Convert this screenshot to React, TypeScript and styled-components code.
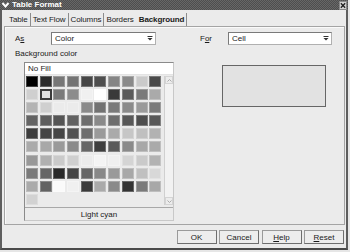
import { createGlobalStyle, styled } from 'styled-components';

const GlobalStyle = createGlobalStyle`
  html, body {
    margin: 0;
    padding: 0;
    background: #e6e6e6;
  }
  body {
    width: 350px;
    height: 252px;
    overflow: hidden;
    font-family: "Liberation Sans", Arial, sans-serif;
    font-size: 8px;
    color: #1a1a1a;
  }
`;

const swatches = [
  '#000000', '#2b2b2b', '#777777', '#747474', '#474747', '#4f4f4f', '#858585', '#8a8a8a', '#cacaca', '#4a4a4a',
  '#cfcfcf', '#e0e0e0', '#7a7a7a', '#8c8c8c', '#f0f0f0', '#ffffff', '#3a3a3a', '#5a5a5a', '#7a7a7a', '#aaaaaa',
  '#b4b4b4', '#cfcfcf', '#ebebeb', '#ebebeb', '#8a8a8a', '#727272', '#7a7a7a', '#8a8a8a', '#9a9a9a', '#7a7a7a',
  '#646464', '#5e5e5e', '#555555', '#626262', '#6e6e6e', '#8a8a8a', '#6e6e6e', '#585858', '#4e4e4e', '#585858',
  '#3c3c3c', '#454545', '#454545', '#525252', '#6e6e6e', '#9a9a9a', '#aaaaaa', '#c6c6c6', '#c0c0c0', '#b2b2b2',
  '#aaaaaa', '#a8a8a8', '#9a9a9a', '#8a8a8a', '#666666', '#3e3e3e', '#5a5a5a', '#8a8a8a', '#a8a8a8', '#aaaaaa',
  '#989898', '#b0b0b0', '#cacaca', '#cfcfcf', '#ebebeb', '#f4f4f4', '#efefef', '#d4d4d4', '#cacaca', '#b2b2b2',
  '#7a7a7a', '#666666', '#2a2a2a', '#444444', '#666666', '#888888', '#9a9a9a', '#a8a8a8', '#c0c0c0', '#d8d8d8',
  '#aaaaaa', '#626262', '#fafafa', '#f0f0f0', '#3a3a3a', '#aaaaaa', '#8a8a8a', '#333333', '#7a7a7a', '#a8a8a8',
  '#d2d2d2',
];

const tabs = ['Table', 'Text Flow', 'Columns', 'Borders', 'Background'];

const App = () => {
  return (
    <>
      <GlobalStyle />
      <Window>
        <TitleBar>
          <svg width="9" height="8" viewBox="0 0 9 8">
            <polyline points="1.5,2 4.5,5.5 7.5,2" fill="none" stroke="#fff" strokeWidth="2" />
          </svg>
          <Title>Table Format</Title>
          <CloseButton>
            <svg width="7" height="7" viewBox="0 0 7 7">
              <path d="M1 1 L6 6 M6 1 L1 6" stroke="#222" strokeWidth="1.6" />
            </svg>
          </CloseButton>
        </TitleBar>

        <TabBar>
          {tabs.map((t, i) => (
            <Tab key={t} active={i === tabs.length - 1} last={i === tabs.length - 2}>
              {t}
            </Tab>
          ))}
        </TabBar>

        <Panel>
          <LeftColumn>
            <FieldRow>
              <FieldLabel width={36}>
                A<u>s</u>
              </FieldLabel>
              <Combo width={105}>
                <span>Color</span>
                <DropArrow />
              </Combo>
            </FieldRow>
            <SectionLabel>Background color</SectionLabel>
            <ColorList>
              <NoFill>No Fill</NoFill>
              <PaletteArea>
                <Palette>
                  {swatches.map((c, i) => (
                    <Swatch key={i} color={c} selected={i === 11} />
                  ))}
                </Palette>
                <ScrollBar>
                  <ScrollButton>
                    <svg width="5" height="3" viewBox="0 0 5 3">
                      <polyline points="0.5,2.5 2.5,0.5 4.5,2.5" fill="none" stroke="#aaa" strokeWidth="1" />
                    </svg>
                  </ScrollButton>
                  <ScrollButton>
                    <svg width="5" height="3" viewBox="0 0 5 3">
                      <polyline points="0.5,0.5 2.5,2.5 4.5,0.5" fill="none" stroke="#aaa" strokeWidth="1" />
                    </svg>
                  </ScrollButton>
                </ScrollBar>
              </PaletteArea>
              <Caption>Light cyan</Caption>
            </ColorList>
          </LeftColumn>

          <RightColumn>
            <FieldRow>
              <FieldLabel width={28}>
                F<u>o</u>r
              </FieldLabel>
              <Combo width={104}>
                <span>Cell</span>
                <DropArrow />
              </Combo>
            </FieldRow>
            <Preview />
          </RightColumn>
        </Panel>

        <ButtonRow>
          <Button>OK</Button>
          <Button>Cancel</Button>
          <Button>
            <u>H</u>elp
          </Button>
          <Button>
            <u>R</u>eset
          </Button>
        </ButtonRow>
      </Window>
    </>
  );
};

const DropArrow = () => (
  <ArrowBox>
    <svg width="6" height="5" viewBox="0 0 6 5">
      <rect x="0.5" y="0" width="5" height="1" fill="#333" />
      <polygon points="0.5,2 5.5,2 3,4.5" fill="#333" />
    </svg>
  </ArrowBox>
);

const Window = styled.div`
  width: 348px;
  height: 250px;
  box-sizing: border-box;
  display: flex;
  flex-direction: column;
  background: #ebebeb;
  border-left: 2px solid #5e5e5e;
  border-right: 2px solid #5e5e5e;
  border-bottom: 2px solid #4a4a4a;
`;

const TitleBar = styled.div`
  height: 10px;
  margin: 0 -2px;
  display: flex;
  align-items: center;
  padding-left: 1px;
  background: repeating-conic-gradient(#4e4e4e 0 25%, #676767 0 50%) 0 0 / 2px 2px;
`;

const Title = styled.span`
  margin-left: 2px;
  flex: 1;
  color: #fff;
  font-weight: bold;
  font-size: 8px;
  line-height: 10px;
`;

const CloseButton = styled.div`
  width: 8px;
  height: 9px;
  margin-right: 1px;
  display: flex;
  align-items: center;
  justify-content: center;
  background: #d4d4d4;
  border: 1px solid #888;
  box-sizing: border-box;
`;

const TabBar = styled.div`
  height: 16px;
  display: flex;
  align-items: flex-end;
  padding-left: 5px;
`;

const Tab = styled.div<{ active: boolean; last: boolean }>`
  height: 13px;
  line-height: 13px;
  padding: 0 2px;
  font-weight: ${({ active }) => (active ? 'bold' : 'normal')};
  border-right: 1px solid ${({ last }) => (last ? 'transparent' : '#8c8c8c')};
  letter-spacing: -0.1px;
`;

const Panel = styled.div`
  height: 199px;
  margin: 0 1px 0 2px;
  box-sizing: border-box;
  border: 1px solid #a4a4a4;
  box-shadow: inset 1px 1px 0 #fafafa;
  padding: 5px 0 0 10px;
  display: grid;
  grid-template-columns: 160px 132px;
  column-gap: 25px;
  align-items: start;
`;

const LeftColumn = styled.div`
  display: flex;
  flex-direction: column;
`;

const RightColumn = styled.div`
  display: flex;
  flex-direction: column;
`;

const FieldRow = styled.div`
  display: flex;
  align-items: center;
  height: 13px;
`;

const FieldLabel = styled.span<{ width: number }>`
  width: ${({ width }) => width}px;
  flex: none;
`;

const Combo = styled.div<{ width: number }>`
  width: ${({ width }) => width}px;
  height: 13px;
  box-sizing: border-box;
  display: flex;
  align-items: center;
  justify-content: space-between;
  padding-left: 3px;
  background: #fff;
  border: 1px solid #7a7a7a;
  border-right-color: #b0b0b0;
  border-bottom-color: #b0b0b0;
`;

const ArrowBox = styled.div`
  width: 10px;
  height: 100%;
  display: flex;
  align-items: center;
  justify-content: center;
`;

const SectionLabel = styled.div`
  margin-top: 4px;
  line-height: 10px;
`;

const ColorList = styled.div`
  margin: 3px 0 0 9px;
  width: 150px;
  height: 159px;
  box-sizing: border-box;
  border: 1px solid #8a8a8a;
  border-right-color: #c8c8c8;
  border-bottom-color: #c8c8c8;
  display: flex;
  flex-direction: column;
`;

const NoFill = styled.div`
  height: 12px;
  line-height: 12px;
  padding-left: 3px;
  background: #fff;
  border-bottom: 1px solid #e4e4e4;
  box-sizing: border-box;
`;

const PaletteArea = styled.div`
  height: 133px;
  display: flex;
  justify-content: space-between;
  padding: 1px 0 0 1px;
  box-sizing: border-box;
  border-bottom: 1px solid #a8a8a8;
`;

const Palette = styled.div`
  display: grid;
  grid-template-columns: repeat(10, 12px);
  grid-auto-rows: 11px;
  column-gap: 1.7px;
  row-gap: 2.1px;
  align-content: start;
`;

const Swatch = styled.div<{ color: string; selected: boolean }>`
  box-sizing: border-box;
  background: ${({ color }) => color};
  border: ${({ selected }) => (selected ? '2px solid #3a3a3a' : '1px solid rgba(255, 255, 255, 0.25)')};
`;

const ScrollBar = styled.div`
  width: 9px;
  height: 129px;
  box-sizing: border-box;
  display: flex;
  flex-direction: column;
  justify-content: space-between;
  background: #f2f2f2;
  border-left: 1px solid #d0d0d0;
`;

const ScrollButton = styled.div`
  height: 8px;
  display: flex;
  align-items: center;
  justify-content: center;
  background: #ececec;
  border: 1px solid #d4d4d4;
  box-sizing: border-box;
`;

const Caption = styled.div`
  flex: 1;
  display: flex;
  align-items: center;
  justify-content: center;
`;

const Preview = styled.div`
  margin: 20px 0 0 22px;
  width: 104px;
  height: 42px;
  box-sizing: border-box;
  background: #e2e2e2;
  border: 1px solid #666;
`;

const ButtonRow = styled.div`
  flex: 1;
  display: flex;
  justify-content: flex-end;
  align-items: flex-start;
  gap: 2.5px;
  padding: 5px 2px 0 0;
`;

const Button = styled.div`
  width: 40px;
  height: 14px;
  box-sizing: border-box;
  display: flex;
  align-items: center;
  justify-content: center;
  background: #ededed;
  border: 1px solid #9a9a9a;
  border-bottom-color: #6e6e6e;
  border-right-color: #6e6e6e;
`;

export default App;
